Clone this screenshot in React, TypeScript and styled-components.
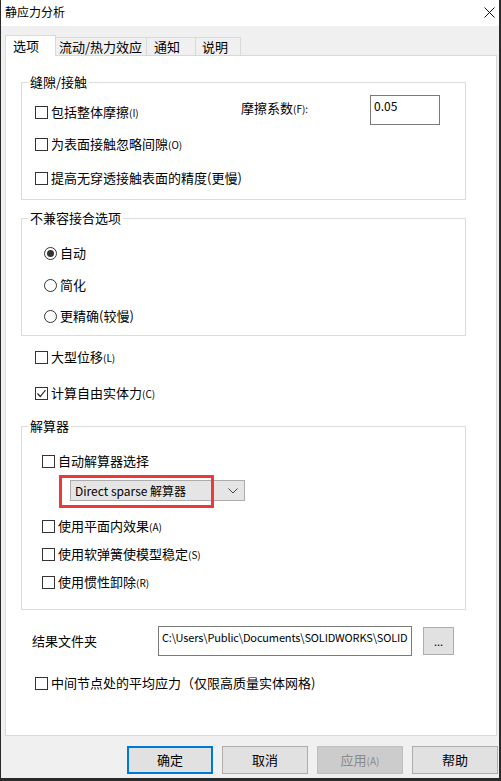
import React from "react";
import styled, { createGlobalStyle } from "styled-components";

const tabs = [
  { label: "选项", width: 51, pad: 7, active: true },
  { label: "流动/热力效应", width: 92, pad: 3, active: false },
  { label: "通知", width: 50, pad: 7, active: false },
  { label: "说明", width: 46, pad: 6, active: false },
];

const GlobalStyle = createGlobalStyle`
  html, body {
    margin: 0;
    padding: 0;
    background: #ffffff;
  }
  body {
    font-family: "Noto Sans CJK SC", "Liberation Sans", sans-serif;
    font-size: 13px;
    color: #000;
  }
  * {
    box-sizing: border-box;
  }
`;

const CheckMark = () => (
  <svg width="11" height="11" viewBox="0 0 11 11">
    <path d="M1.5 5.5 L4.3 8.5 L9.5 2" fill="none" stroke="#222" strokeWidth="1.2" />
  </svg>
);

const Check = ({
  checked,
  top = 0,
  left = 0,
  children,
}: {
  checked?: boolean;
  top?: number;
  left?: number;
  children: React.ReactNode;
}) => (
  <CheckRow $top={top} $left={left}>
    <Box>{checked && <CheckMark />}</Box>
    <span>{children}</span>
  </CheckRow>
);

const Radio = ({
  selected,
  top = 0,
  children,
}: {
  selected?: boolean;
  top?: number;
  children: React.ReactNode;
}) => (
  <CheckRow $top={top} $left={0}>
    <Circle>{selected && <Dot />}</Circle>
    <RadioText>{children}</RadioText>
  </CheckRow>
);

const App = () => {
  return (
    <>
      <GlobalStyle />
      <Window>
        <TitleBar>
          <Title>静应力分析</Title>
          <Close>
            <svg width="11" height="11" viewBox="0 0 11 11">
              <path d="M0.5 0.5 L10.5 10.5 M10.5 0.5 L0.5 10.5" stroke="#111" strokeWidth="1" />
            </svg>
          </Close>
        </TitleBar>

        <Body>
          <TabRow>
            {tabs.map((t) => (
              <Tab key={t.label} $active={t.active} $width={t.width} $pad={t.pad}>
                {t.label}
              </Tab>
            ))}
          </TabRow>

          <Panel>
            <Group $top={18}>
              <Legend>缝隙/接触</Legend>
              <GroupBody $pad="5px 0 11px 13px">
                <FrictionRow>
                  <LeftCell>
                    <Check>
                      包括整体摩擦<Key>(I)</Key>
                    </Check>
                  </LeftCell>
                  <FrictionLabel>
                    摩擦系数<Key>(F):</Key>
                  </FrictionLabel>
                  <ValueBox>0.05</ValueBox>
                </FrictionRow>
                <Check top={9}>
                  为表面接触忽略间隙<Key>(O)</Key>
                </Check>
                <Check top={14}>提高无穿透接触表面的精度(更慢)</Check>
              </GroupBody>
            </Group>

            <Group $top={10}>
              <Legend>不兼容接合选项</Legend>
              <GroupBody $pad="17px 0 9px 22px">
                <Radio selected>自动</Radio>
                <Radio top={12}>简化</Radio>
                <Radio top={11}>更精确(较慢)</Radio>
              </GroupBody>
            </Group>

            <Check top={11} left={14}>
              大型位移<Key>(L)</Key>
            </Check>
            <Check top={16} left={14} checked>
              计算自由实体力<Key>(C)</Key>
            </Check>

            <Group $top={15}>
              <Legend>解算器</Legend>
              <GroupBody $pad="17px 0 17px 20px">
                <Check>自动解算器选择</Check>
                <SelectWrap>
                  <Select>
                    <span>Direct sparse 解算器</span>
                    <svg width="10" height="6" viewBox="0 0 10 6">
                      <path d="M0.5 0.5 L5 5 L9.5 0.5" fill="none" stroke="#444" strokeWidth="1" />
                    </svg>
                  </Select>
                  <Highlight />
                </SelectWrap>
                <Check top={15}>
                  使用平面内效果<Key>(A)</Key>
                </Check>
                <Check top={8}>
                  使用软弹簧使模型稳定<Key>(S)</Key>
                </Check>
                <Check top={8}>
                  使用惯性卸除<Key>(R)</Key>
                </Check>
              </GroupBody>
            </Group>

            <FolderRow>
              <FolderLabel>结果文件夹</FolderLabel>
              <PathBox>C:\Users\Public\Documents\SOLIDWORKS\SOLID</PathBox>
              <BrowseButton>...</BrowseButton>
            </FolderRow>

            <Check top={17} left={14}>
              中间节点处的平均应力（仅限高质量实体网格)
            </Check>
          </Panel>

          <ButtonBar>
            <DialogButton $primary>确定</DialogButton>
            <DialogButton>取消</DialogButton>
            <DialogButton disabled>
              应用<Key>(A)</Key>
            </DialogButton>
            <DialogButton>帮助</DialogButton>
          </ButtonBar>
        </Body>
      </Window>
    </>
  );
};

export default App;

const Window = styled.div`
  width: 501px;
  height: 781px;
  display: flex;
  flex-direction: column;
  background: #f0f0f0;
  border-left: 1px solid #2a2a2a;
  border-right: 2px solid #2a2a2a;
  border-bottom: 3px solid #2a2a2a;
`;

const TitleBar = styled.div`
  height: 26px;
  flex-shrink: 0;
  background: #ffffff;
  display: flex;
  align-items: center;
  justify-content: space-between;
  padding: 0 4px 2px 4px;
`;

const Title = styled.span`
  font-size: 12px;
  line-height: 16px;
`;

const Close = styled.span`
  display: flex;
  align-items: center;
`;

const Body = styled.div`
  flex: 1;
  display: flex;
  flex-direction: column;
  padding: 9px 0 0 4px;
`;

const TabRow = styled.div`
  display: flex;
  align-items: flex-end;
  height: 20px;
  position: relative;
  z-index: 1;
`;

const Tab = styled.div<{ $active: boolean; $width: number; $pad: number }>`
  width: ${(p) => p.$width}px;
  height: ${(p) => (p.$active ? 21 : 18)}px;
  margin-bottom: ${(p) => (p.$active ? -1 : 0)}px;
  margin-left: ${(p) => (p.$active ? 0 : -1)}px;
  background: ${(p) => (p.$active ? "#ffffff" : "#f0f0f0")};
  border: 1px solid #d9d9d9;
  border-bottom: none;
  display: flex;
  align-items: center;
  padding-left: ${(p) => p.$pad}px;
  font-size: 13px;
  line-height: 16px;
  white-space: nowrap;
  &:first-child {
    margin-left: 0;
  }
`;

const Panel = styled.div`
  width: 492px;
  height: 681px;
  flex-shrink: 0;
  background: #ffffff;
  border: 1px solid #d9d9d9;
  padding: 0 30px 0 15px;
  display: flex;
  flex-direction: column;
  align-items: flex-start;
`;

const Group = styled.fieldset<{ $top: number }>`
  align-self: stretch;
  margin: ${(p) => p.$top}px 0 0 0;
  padding: 0;
  border: 1px solid #dcdcdc;
  min-width: 0;
`;

const GroupBody = styled.div<{ $pad: string }>`
  padding: ${(p) => p.$pad};
  display: flex;
  flex-direction: column;
  align-items: flex-start;
`;

const Legend = styled.legend`
  margin-left: 6px;
  padding: 0 2px;
  font-size: 13px;
  line-height: 16px;
`;

const CheckRow = styled.div<{ $top: number; $left: number }>`
  display: flex;
  align-items: center;
  height: 20px;
  margin-top: ${(p) => p.$top}px;
  margin-left: ${(p) => p.$left}px;
  font-size: 13px;
  line-height: 16px;
  white-space: nowrap;
`;

const Box = styled.span`
  width: 13px;
  height: 13px;
  border: 1px solid #333333;
  background: #ffffff;
  margin-right: 3px;
  display: flex;
  align-items: center;
  justify-content: center;
  flex-shrink: 0;
`;

const Circle = styled.span`
  width: 13px;
  height: 13px;
  border: 1px solid #333333;
  border-radius: 50%;
  background: #ffffff;
  display: flex;
  align-items: center;
  justify-content: center;
  flex-shrink: 0;
`;

const Dot = styled.span`
  width: 7px;
  height: 7px;
  border-radius: 50%;
  background: #333333;
`;

const RadioText = styled.span`
  margin-left: 3px;
`;

const Key = styled.span`
  font-size: 10px;
`;

const FrictionRow = styled.div`
  display: flex;
  align-items: flex-start;
`;

const LeftCell = styled.div`
  width: 206px;
  padding-top: 7px;
`;

const FrictionLabel = styled.div`
  width: 129px;
  margin-top: 5px;
  font-size: 13px;
  line-height: 16px;
  white-space: nowrap;
`;

const ValueBox = styled.div`
  width: 70px;
  height: 30px;
  border: 1px solid #7a7a7a;
  padding: 2px 3px;
  font-size: 12px;
  line-height: 16px;
`;

const SelectWrap = styled.div`
  position: relative;
  margin: 9px 0 0 28px;
`;

const Select = styled.div`
  width: 175px;
  height: 21px;
  background: #e5e5e5;
  border: 1px solid #acacac;
  display: flex;
  align-items: center;
  justify-content: space-between;
  padding: 0 6px 0 4px;
  font-size: 12px;
  line-height: 16px;
  white-space: nowrap;
`;

const Highlight = styled.div`
  position: absolute;
  left: -11px;
  top: -5px;
  width: 155px;
  height: 33px;
  border: 3px solid #ea3a3a;
  pointer-events: none;
`;

const FolderRow = styled.div`
  display: flex;
  align-items: center;
  margin-top: 16px;
  margin-left: 11px;
`;

const FolderLabel = styled.div`
  width: 126px;
  font-size: 13px;
  line-height: 16px;
`;

const PathBox = styled.div`
  width: 254px;
  height: 30px;
  border: 1px solid #7a7a7a;
  padding: 2px 3px;
  font-size: 11px;
  letter-spacing: -0.15px;
  line-height: 16px;
  white-space: nowrap;
  overflow: hidden;
`;

const BrowseButton = styled.div`
  width: 31px;
  height: 28px;
  margin-left: 11px;
  background: #e1e1e1;
  border: 1px solid #adadad;
  display: flex;
  align-items: center;
  justify-content: center;
  font-size: 11px;
  line-height: 16px;
`;

const ButtonBar = styled.div`
  display: flex;
  justify-content: flex-end;
  gap: 9px;
  margin-top: 10px;
  padding-right: 1px;
`;

const DialogButton = styled.button<{ $primary?: boolean }>`
  width: 86px;
  height: 28px;
  margin: 0;
  padding: 0;
  font-family: inherit;
  font-size: 13px;
  line-height: 16px;
  color: #000;
  background: #e1e1e1;
  border: ${(p) => (p.$primary ? "2px solid #0078d7" : "1px solid #adadad")};
  &:disabled {
    background: #cccccc;
    border-color: #bfbfbf;
    color: #8a8a8a;
  }
`;
